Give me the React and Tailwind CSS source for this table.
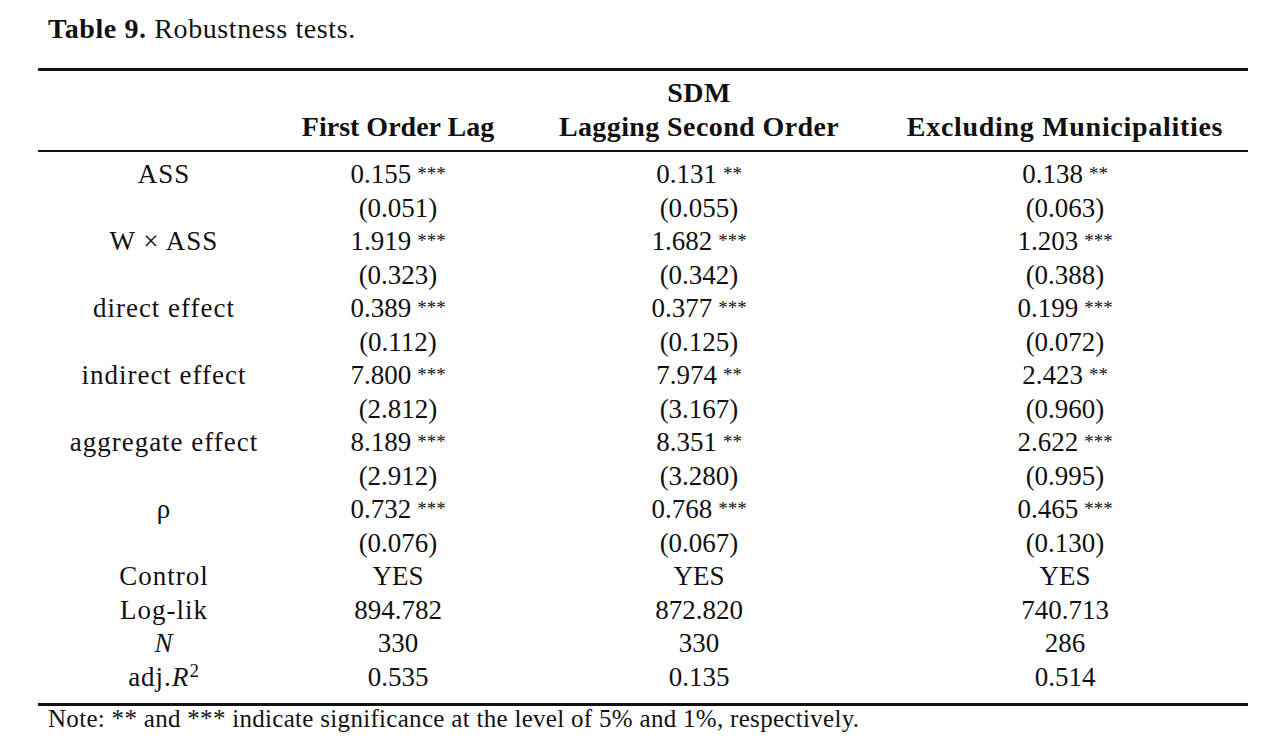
import React from "react";

const rows = [
  { label: "ASS", values: [["0.155", "***"], ["0.131", "**"], ["0.138", "**"]] },
  { label: "", values: [["(0.051)"], ["(0.055)"], ["(0.063)"]] },
  { label: "W \u00d7 ASS", values: [["1.919", "***"], ["1.682", "***"], ["1.203", "***"]] },
  { label: "", values: [["(0.323)"], ["(0.342)"], ["(0.388)"]] },
  { label: "direct effect", values: [["0.389", "***"], ["0.377", "***"], ["0.199", "***"]] },
  { label: "", values: [["(0.112)"], ["(0.125)"], ["(0.072)"]] },
  { label: "indirect effect", values: [["7.800", "***"], ["7.974", "**"], ["2.423", "**"]] },
  { label: "", values: [["(2.812)"], ["(3.167)"], ["(0.960)"]] },
  { label: "aggregate effect", values: [["8.189", "***"], ["8.351", "**"], ["2.622", "***"]] },
  { label: "", values: [["(2.912)"], ["(3.280)"], ["(0.995)"]] },
  { label: "\u03c1", values: [["0.732", "***"], ["0.768", "***"], ["0.465", "***"]] },
  { label: "", values: [["(0.076)"], ["(0.067)"], ["(0.130)"]] },
  { label: "Control", values: [["YES"], ["YES"], ["YES"]] },
  { label: "Log-lik", values: [["894.782"], ["872.820"], ["740.713"]] },
  { label: "N", italic: true, values: [["330"], ["330"], ["286"]] },
  { label: "adj", values: [["0.535"], ["0.135"], ["0.514"]] },
];

const Cell = ({ value }) => (
  <div className="text-center whitespace-nowrap">
    {value[0]}
    {value[1] && (
      <span className="relative top-[-3px] text-[19px] ml-[6px]">{value[1]}</span>
    )}
  </div>
);

const RowLabel = ({ row }) => {
  if (row.label === "adj") {
    return (
      <div className="text-center tracking-[1px]">
        adj.<span className="italic">R</span>
        <span className="relative top-[-9px] text-[19px]">2</span>
      </div>
    );
  }
  return (
    <div className={`text-center tracking-[1px] ${row.italic ? "italic" : ""}`}>
      {row.label}
    </div>
  );
};

const App = () => {
  return (
    <div className="w-[1269px] h-[739px] bg-white text-[#111] font-['Liberation_Serif',serif] pt-[14px] overflow-hidden">
      {/* Caption */}
      <div className="pl-[48px] text-[28px] leading-[30px] tracking-[0.6px]">
        <span className="font-bold">Table 9.</span> Robustness tests.
      </div>

      <div className="ml-[38px] w-[1210px] mt-[24px]">
        <div className="h-[3px] bg-[#111]"></div>

        {/* Header */}
        <div className="grid grid-cols-[252px_216px_386px_346px] text-[28px] leading-[34px] font-bold mt-[5px]">
          <div></div>
          <div></div>
          <div className="text-center tracking-[0.5px]">SDM</div>
          <div></div>
          <div></div>
          <div className="text-center whitespace-nowrap">First Order Lag</div>
          <div className="text-center whitespace-nowrap tracking-[0.4px]">Lagging Second Order</div>
          <div className="text-center whitespace-nowrap tracking-[0.7px]">Excluding Municipalities</div>
        </div>
        <div className="h-[2px] bg-[#111] mt-[6px]"></div>

        {/* Body */}
        <div className="mt-[6px] text-[27px]">
          {rows.map((row, i) => (
            <div
              key={i}
              className="grid grid-cols-[252px_216px_386px_346px] h-[33.5px] leading-[33.5px]"
            >
              <RowLabel row={row} />
              {row.values.map((v, j) => (
                <Cell key={j} value={v} />
              ))}
            </div>
          ))}
        </div>
        <div className="h-[3px] bg-[#111] mt-[9px]"></div>
      </div>

      {/* Footnote */}
      <div className="pl-[48px] text-[25px] leading-[26px] tracking-[0.3px]">
        Note: ** and *** indicate significance at the level of 5% and 1%, respectively.
      </div>
    </div>
  );
};

export default App;
